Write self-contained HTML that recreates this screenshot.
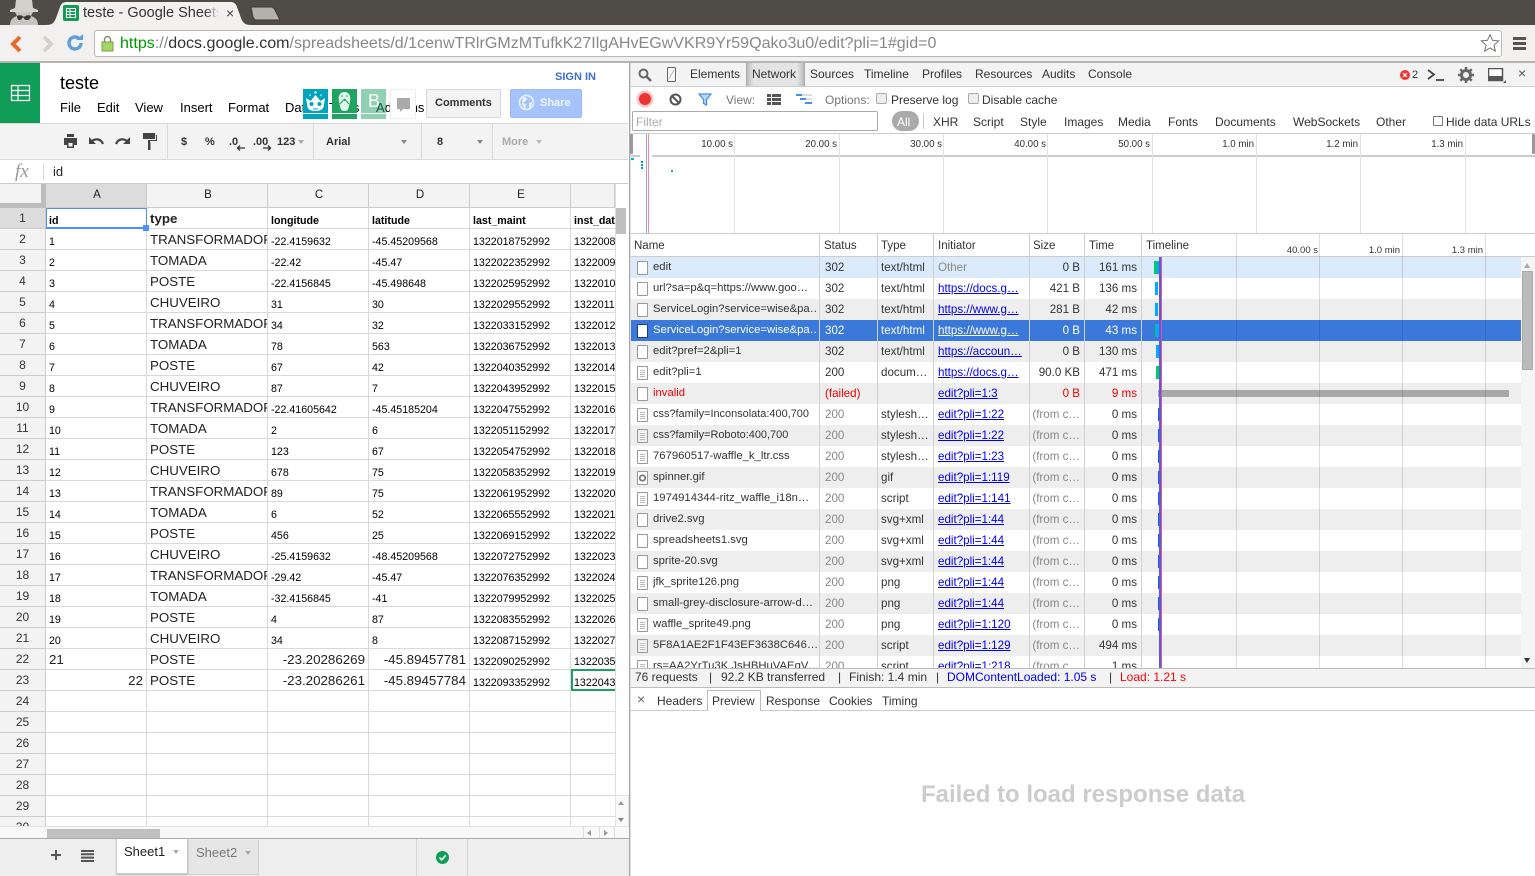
<!DOCTYPE html>
<html lang="en"><head><meta charset="utf-8"><title>teste - Google Sheets</title>
<style>
*{box-sizing:border-box}
html,body{margin:0;padding:0}
body{width:1535px;height:876px;overflow:hidden;position:relative;background:#fff;font-family:"Liberation Sans",Arial,sans-serif;color:#000}
.a{position:absolute;white-space:nowrap}
svg{position:absolute;display:block}
.box{position:absolute}
/* sheet */
#sh{position:absolute;left:0;top:208px;width:615px;height:618px;overflow:hidden}
#sh table{border-collapse:separate;border-spacing:0;table-layout:fixed;width:671px}
#sh td{height:21px;padding:0 3px 0;border-right:1px solid #d9d9d9;border-bottom:1px solid #d9d9d9;font-size:10.67px;line-height:13px;vertical-align:bottom;white-space:nowrap;overflow:hidden;color:#000}
#sh td:first-child{background:#f3f3f3;border-right:1px solid #ccc;border-bottom:1px solid #ccc;text-align:center;font-size:12px;color:#333;padding:0;vertical-align:middle;line-height:20px}
#sh td:nth-child(3){font-size:13.33px;line-height:16px;padding-bottom:1px;color:#222}
#sh td.l{font-size:13.33px;line-height:16px;padding-bottom:1px;color:#222}
#sh td.rt{font-size:13.33px;line-height:16px;padding-bottom:1px;text-align:right;color:#222}
#sh tr.h td{font-weight:bold}
.ch{position:absolute;top:184px;height:24px;background:#f3f3f3;border-right:1px solid #ccc;border-bottom:1px solid #ccc;text-align:center;font-size:11.5px;line-height:23px;color:#222;padding-left:2px}
.mn{position:absolute;top:100px;font-size:13px;line-height:15px;color:#000}
.tb{position:absolute;top:135px;font-size:11px;line-height:15px;font-weight:bold;color:#333}
.ar{position:absolute;width:0;height:0;border-left:3.5px solid transparent;border-right:3.5px solid transparent;border-top:4px solid #888}
/* devtools */
#dv{font-size:12px;color:#333}
.dt{position:absolute;font-size:12px;line-height:14px;white-space:nowrap;color:#333}
.r{position:absolute;left:631px;width:890px;height:21px;font-size:11.6px;line-height:21px;color:#333}
.r span{position:absolute;top:0;white-space:nowrap;overflow:hidden}
.r .n{left:22px;width:165px;font-size:11.3px}
.r .s{left:194px}
.r .t{left:250px;width:52px}
.r .i{left:307px;color:#00e;text-decoration:underline;max-width:84px}
.r .z{left:399px;width:50px;text-align:right}
.r .m{left:454px;width:52px;text-align:right}
.r .c{color:#888}
.g{background:#eee}
.sel{background:#3a78d9;color:#fff}
.sel .i{color:#fff}
.ic{position:absolute;left:6px;top:4px;width:11px;height:14px;background:#fff;border:1px solid #999;border-radius:1px}
.ic.d{background:repeating-linear-gradient(#fff 0 1px,#bbb 1px 2px);background-clip:content-box;padding:2px}
.v{position:absolute;width:1px;background:#d0d0d0}
.bar{position:absolute;height:13px}
.tl{position:absolute;top:138px;font-size:9.7px;line-height:14px;color:#333;text-align:right;width:60px;white-space:nowrap}
</style></head><body>

<!-- chrome top -->
<div class="box" style="left:0;top:0;width:1535px;height:25px;background:#4f4c45"></div>
<svg style="left:6px;top:0" width="36" height="25" viewBox="0 0 36 25"><path d="M4 25c0-6 4-8 7-9l-2-4h18l-2 4c3 1 7 3 7 9z" fill="#c6c5c0"/><path d="M10 0h16l1 8 5 2v2H4v-2l5-2z" fill="#d2d1cc"/><path d="M11 16c2-1 5-1 6 .5h2c1-1.500 4-1.500 6-.5-.5 3-2 4-4 4s-3-1-3.500-2.500h-1C16 19 15 20 13.500 20c-1.500 0-2.500-1-2.500-4z" fill="#3c3a35"/></svg>
<svg style="left:46px;top:1px" width="209" height="24" viewBox="0 0 209 24"><path d="M0 24c6 0 8-2 10-7l4-11c1-3 3-5 6-5h165c3 0 5 2 6 5l4 11c2 5 4 7 10 7z" fill="#f2f1f0"/></svg>
<svg style="left:250px;top:6px" width="31" height="15" viewBox="0 0 31 15"><path d="M1 1h20c2 0 3 1 4 3l5 10H6c-1 0-2-1-3-3z" fill="#b3b1aa" stroke="#3d3b36"/></svg>
<div class="box" style="left:63px;top:5px;width:16px;height:16px;background:#0f9d58;border-radius:2px"></div>
<svg style="left:66px;top:8px" width="10" height="10" viewBox="0 0 10 10"><path d="M.5.5h9v9h-9zM.5 3.500h9M.5 6.500h9M4 .5v9" fill="none" stroke="#fff"/></svg>
<div class="a" style="left:83px;top:4px;width:136px;overflow:hidden;font-size:14.5px;line-height:18px;color:#333">teste - Google Sheets</div>
<div class="box" style="left:205px;top:4px;width:14px;height:18px;background:linear-gradient(90deg,rgba(242,241,240,0),#f2f1f0)"></div>
<div class="a" style="left:226px;top:5px;font-size:14px;line-height:16px;color:#444">×</div>

<div class="box" style="left:0;top:25px;width:1535px;height:38px;background:#f2f1f0;border-bottom:2px solid #b5b5b5"></div>
<svg style="left:8px;top:34px" width="16" height="20" viewBox="0 0 16 20"><path d="M12 3L5 10l7 7" fill="none" stroke="#e8692c" stroke-width="4"/></svg>
<svg style="left:40px;top:34px" width="16" height="20" viewBox="0 0 16 20"><path d="M4 3l7 7-7 7" fill="none" stroke="#d3d2cf" stroke-width="4"/></svg>
<svg style="left:66px;top:34px" width="18" height="18" viewBox="0 0 18 18"><path d="M15 9a6 6 0 1 1-2-4.500" fill="none" stroke="#5f9fdd" stroke-width="3.400"/><path d="M10 6h7V0z" fill="#5f9fdd"/></svg>
<div class="box" style="left:94px;top:30px;width:1408px;height:27px;background:#fff;border:1px solid #b8b8b6;border-radius:3px"></div>
<svg style="left:101px;top:35px" width="13" height="17" viewBox="0 0 13 17"><path d="M3.500 7V4.500a3 3 0 0 1 6 0V7" fill="none" stroke="#8a8a80" stroke-width="1.500"/><rect x="1" y="7" width="11" height="9" fill="#a8d468" stroke="#78a040"/></svg>
<div class="a" style="left:120px;top:34px;font-size:16.06px;line-height:18px;color:#888"><span style="color:#090">https</span>://<span style="color:#333">docs.google.com</span>/spreadsheets/d/1cenwTRlrGMzMTufkK27IlgAHvEGwVKR9Yr59Qako3u0/edit?pli=1#gid=0</div>
<svg style="left:1480px;top:33px" width="20" height="20" viewBox="0 0 20 20"><path d="M10 1.500l2.500 5.800 6.200.6-4.700 4.100 1.400 6.100-5.400-3.200-5.400 3.200 1.400-6.100L1.300 7.900l6.200-.6z" fill="#fff" stroke="#777"/></svg>
<div class="box" style="left:1513px;top:37px;width:13px;height:3px;background:#555"></div>
<div class="box" style="left:1513px;top:42px;width:13px;height:3px;background:#555"></div>
<div class="box" style="left:1513px;top:47px;width:13px;height:3px;background:#555"></div>

<!-- sheets header -->
<div class="box" style="left:0;top:63px;width:40px;height:60px;background:#0f9d58"></div>
<svg style="left:10px;top:84px" width="21" height="18" viewBox="0 0 21 18"><path d="M1.500 1.500h18v15h-18zM1.500 6.500h18M1.500 11.500h18M8 1.500v15" fill="none" stroke="#fff" stroke-width="1.200"/></svg>
<div class="a" style="left:60px;top:72px;font-size:18px;line-height:22px">teste</div>
<div class="mn" style="left:60px">File</div><div class="mn" style="left:97px">Edit</div><div class="mn" style="left:135px">View</div><div class="mn" style="left:180px">Insert</div><div class="mn" style="left:228px">Format</div><div class="mn" style="left:285px">Data</div><div class="mn" style="left:329px">Tools</div><div class="mn" style="left:376px">Add-ons</div>
<div class="a" style="left:555px;top:71px;font-size:11px;line-height:13px;font-weight:bold;color:#3d6fd6">SIGN IN</div>

<div class="box" style="left:303px;top:89px;width:25px;height:30px;background:#00a5bd"></div>
<div class="box" style="left:303px;top:113px;width:25px;height:1px;background:#fff"></div>
<svg style="left:303px;top:89px" width="25" height="24" viewBox="0 0 25 24"><circle cx="12.500" cy="3.500" r="1.200" fill="#fff"/><circle cx="7" cy="6" r=".8" fill="#fff"/><circle cx="18" cy="6" r=".8" fill="#fff"/><path d="M3 9l4.500 3L12.500 6l5 6L22 9l-1.500 9c-1 3-4 4-8 4s-7-1-8-4z" fill="#fff"/><circle cx="8.500" cy="15" r="2" fill="#00a5bd"/><circle cx="16.500" cy="15" r="2" fill="#00a5bd"/><path d="M10 20h5" stroke="#00a5bd"/></svg>
<div class="box" style="left:332px;top:89px;width:25px;height:30px;background:#1fa463"></div>
<div class="box" style="left:332px;top:113px;width:25px;height:1px;background:#fff"></div>
<svg style="left:332px;top:89px" width="25" height="24" viewBox="0 0 25 24"><path d="M12.500 3c4 0 6 3 5.800 7-.2 4-1.300 6-1.800 9-.3 2-2 3-4 3s-3.700-1-4-3c-.5-3-1.600-5-1.800-9C6.500 6 8.500 3 12.500 3z" fill="#e2f5ea"/><path d="M12.500 10L8 15M12.500 10l4.500 5M12.500 10v2" stroke="#1fa463" fill="none"/><circle cx="10" cy="7" r=".8" fill="#1fa463"/><circle cx="15" cy="7" r=".8" fill="#1fa463"/></svg>
<div class="box" style="left:361px;top:89px;width:25px;height:30px;background:#1fa463;opacity:.5"></div>
<div class="box" style="left:361px;top:113px;width:25px;height:1px;background:#fff"></div>
<div class="a" style="left:368px;top:91px;font-size:18px;line-height:20px;color:#fff">B</div>
<div class="box" style="left:390px;top:89px;width:26px;height:30px;background:#fff;border:1px solid #eee"></div>
<svg style="left:396px;top:98px" width="15" height="15" viewBox="0 0 15 15"><path d="M1 0h13v11H7l-3 3v-3H1z" fill="#aaa"/></svg>
<div class="box" style="left:426px;top:89px;width:75px;height:29px;background:#f3f3f3;border:1px solid #d8d8d8;border-radius:2px"></div>
<div class="a" style="left:435px;top:96px;font-size:11px;line-height:14px;font-weight:bold;color:#333">Comments</div>
<div class="box" style="left:510px;top:89px;width:72px;height:29px;background:#a6c4fb;border:1px solid #9cbcf5;border-radius:2px"></div>
<svg style="left:518px;top:94px" width="17" height="17" viewBox="0 0 17 17"><circle cx="8.500" cy="8.500" r="7" fill="none" stroke="#eef4ff" stroke-width="1.500"/><path d="M5 3l4 1-1 3-3 1 3 3-1 4-3-5zM11 9l3-1-1 5-2 1z" fill="#eef4ff"/></svg>
<div class="a" style="left:540px;top:96px;font-size:11px;line-height:14px;font-weight:bold;color:#f0f5ff">Share</div>

<!-- toolbar -->
<div class="box" style="left:0;top:123px;width:628px;height:37px;background:#f3f3f3;border-top:1px solid #d9d9d9;border-bottom:1px solid #d9d9d9"></div>
<div class="box" style="left:167px;top:124px;width:1px;height:35px;background:#d9d9d9"></div>
<div class="box" style="left:313px;top:124px;width:1px;height:35px;background:#d9d9d9"></div>
<div class="box" style="left:421px;top:124px;width:1px;height:35px;background:#d9d9d9"></div>
<div class="box" style="left:492px;top:124px;width:1px;height:35px;background:#d9d9d9"></div>
<svg style="left:63px;top:134px" width="15" height="14" viewBox="0 0 15 14"><path d="M4 0h7v3H4zM1 4h13v7h-3v3H4v-3H1zM5.500 9v3.500h4V9z" fill="#444" fill-rule="evenodd"/></svg>
<svg style="left:88px;top:136px" width="17" height="11" viewBox="0 0 17 11"><path d="M4 5c4-3 9-2 11 3" fill="none" stroke="#444" stroke-width="2.200"/><path d="M1 1v7h7z" fill="#444"/></svg>
<svg style="left:114px;top:136px" width="17" height="11" viewBox="0 0 17 11"><path d="M13 5C9 2 4 3 2 8" fill="none" stroke="#444" stroke-width="2.200"/><path d="M16 1v7H9z" fill="#444"/></svg>
<svg style="left:142px;top:132px" width="16" height="18" viewBox="0 0 16 18"><path d="M1 1h12v6H1zM13.500 3H15v6H8v2H6V8h8V4" fill="#444"/><path d="M6 10h2.500v8H6z" fill="#444"/></svg>
<div class="tb" style="left:181px">$</div><div class="tb" style="left:205px">%</div>
<div class="tb" style="left:229px">.0</div><div class="tb" style="left:253px">.00</div><div class="tb" style="left:277px">123</div>
<svg style="left:236px;top:145px" width="10" height="6" viewBox="0 0 10 6"><path d="M9 3H2M4 .5L1.500 3 4 5.500" fill="none" stroke="#333" stroke-width="1.300"/></svg>
<svg style="left:262px;top:145px" width="10" height="6" viewBox="0 0 10 6"><path d="M1 3h7M6 .5L8.500 3 6 5.500" fill="none" stroke="#333" stroke-width="1.300"/></svg>
<div class="ar" style="left:298px;top:140px;border-top-color:#aaa"></div>
<div class="tb" style="left:326px">Arial</div><div class="ar" style="left:401px;top:140px"></div>
<div class="tb" style="left:437px">8</div><div class="ar" style="left:477px;top:140px"></div>
<div class="tb" style="left:502px;color:#aaa">More</div><div class="ar" style="left:536px;top:140px;border-top-color:#bbb"></div>

<!-- formula -->
<div class="a" style="left:15px;top:161px;font-family:'Liberation Serif',serif;font-style:italic;font-size:19px;line-height:21px;color:#999">fx</div>
<div class="box" style="left:43px;top:163px;width:1px;height:17px;background:#d9d9d9"></div>
<div class="a" style="left:53px;top:164px;font-size:13px;line-height:15px;color:#222">id</div>
<div class="box" style="left:0;top:183px;width:628px;height:1px;background:#ccc"></div>

<!-- col headers -->
<div class="box" style="left:0;top:184px;width:46px;height:24px;background:#f3f3f3"></div>
<div class="box" style="left:41px;top:184px;width:5px;height:24px;background:#bdbdbd"></div>
<div class="box" style="left:0;top:203px;width:46px;height:5px;background:#bdbdbd"></div>
<div class="ch" style="left:46px;width:101px;background:#dcdcdc">A</div>
<div class="ch" style="left:147px;width:121px">B</div>
<div class="ch" style="left:268px;width:101px">C</div>
<div class="ch" style="left:369px;width:101px">D</div>
<div class="ch" style="left:470px;width:101px">E</div>
<div class="ch" style="left:571px;width:44px"></div>

<div id="sh"><table><colgroup><col style="width:46px"><col style="width:101px"><col style="width:121px"><col style="width:101px"><col style="width:101px"><col style="width:101px"><col style="width:100px"></colgroup><tbody>
<tr class="h"><td style="background:#dcdcdc;font-weight:normal">1</td><td>id</td><td>type</td><td>longitude</td><td>latitude</td><td>last_maint</td><td>inst_date</td></tr>
<tr><td>2</td><td>1</td><td>TRANSFORMADOR</td><td>-22.4159632</td><td>-45.45209568</td><td>1322018752992</td><td>1322008752992</td></tr>
<tr><td>3</td><td>2</td><td>TOMADA</td><td>-22.42</td><td>-45.47</td><td>1322022352992</td><td>1322009152992</td></tr>
<tr><td>4</td><td>3</td><td>POSTE</td><td>-22.4156845</td><td>-45.498648</td><td>1322025952992</td><td>1322010352992</td></tr>
<tr><td>5</td><td>4</td><td>CHUVEIRO</td><td>31</td><td>30</td><td>1322029552992</td><td>1322011552992</td></tr>
<tr><td>6</td><td>5</td><td>TRANSFORMADOR</td><td>34</td><td>32</td><td>1322033152992</td><td>1322012752992</td></tr>
<tr><td>7</td><td>6</td><td>TOMADA</td><td>78</td><td>563</td><td>1322036752992</td><td>1322013952992</td></tr>
<tr><td>8</td><td>7</td><td>POSTE</td><td>67</td><td>42</td><td>1322040352992</td><td>1322014152992</td></tr>
<tr><td>9</td><td>8</td><td>CHUVEIRO</td><td>87</td><td>7</td><td>1322043952992</td><td>1322015352992</td></tr>
<tr><td>10</td><td>9</td><td>TRANSFORMADOR</td><td>-22.41605642</td><td>-45.45185204</td><td>1322047552992</td><td>1322016552992</td></tr>
<tr><td>11</td><td>10</td><td>TOMADA</td><td>2</td><td>6</td><td>1322051152992</td><td>1322017752992</td></tr>
<tr><td>12</td><td>11</td><td>POSTE</td><td>123</td><td>67</td><td>1322054752992</td><td>1322018952992</td></tr>
<tr><td>13</td><td>12</td><td>CHUVEIRO</td><td>678</td><td>75</td><td>1322058352992</td><td>1322019152992</td></tr>
<tr><td>14</td><td>13</td><td>TRANSFORMADOR</td><td>89</td><td>75</td><td>1322061952992</td><td>1322020352992</td></tr>
<tr><td>15</td><td>14</td><td>TOMADA</td><td>6</td><td>52</td><td>1322065552992</td><td>1322021552992</td></tr>
<tr><td>16</td><td>15</td><td>POSTE</td><td>456</td><td>25</td><td>1322069152992</td><td>1322022752992</td></tr>
<tr><td>17</td><td>16</td><td>CHUVEIRO</td><td>-25.4159632</td><td>-48.45209568</td><td>1322072752992</td><td>1322023952992</td></tr>
<tr><td>18</td><td>17</td><td>TRANSFORMADOR</td><td>-29.42</td><td>-45.47</td><td>1322076352992</td><td>1322024152992</td></tr>
<tr><td>19</td><td>18</td><td>TOMADA</td><td>-32.4156845</td><td>-41</td><td>1322079952992</td><td>1322025352992</td></tr>
<tr><td>20</td><td>19</td><td>POSTE</td><td>4</td><td>87</td><td>1322083552992</td><td>1322026552992</td></tr>
<tr><td>21</td><td>20</td><td>CHUVEIRO</td><td>34</td><td>8</td><td>1322087152992</td><td>1322027752992</td></tr>
<tr><td>22</td><td class="l">21</td><td>POSTE</td><td class="rt">-23.20286269</td><td class="rt">-45.89457781</td><td>1322090252992</td><td>1322035252992</td></tr>
<tr><td>23</td><td class="rt">22</td><td>POSTE</td><td class="rt">-23.20286261</td><td class="rt">-45.89457784</td><td>1322093352992</td><td>1322043352992</td></tr>
<tr><td>24</td><td></td><td></td><td></td><td></td><td></td><td></td></tr>
<tr><td>25</td><td></td><td></td><td></td><td></td><td></td><td></td></tr>
<tr><td>26</td><td></td><td></td><td></td><td></td><td></td><td></td></tr>
<tr><td>27</td><td></td><td></td><td></td><td></td><td></td><td></td></tr>
<tr><td>28</td><td></td><td></td><td></td><td></td><td></td><td></td></tr>
<tr><td>29</td><td></td><td></td><td></td><td></td><td></td><td></td></tr>
<tr><td>30</td><td></td><td></td><td></td><td></td><td></td><td></td></tr>
</tbody></table></div>
<!-- selections -->
<div class="box" style="left:46px;top:208px;width:101px;height:21px;border:2px solid #4d90fe;border-width:1px 1px 2px 1px"></div>
<div class="box" style="left:143px;top:225px;width:6px;height:6px;background:#4d90fe"></div>
<div class="box" style="left:571px;top:669px;width:44px;height:22px;border:2px solid #1c9f5f;border-right:none"></div>

<!-- sheet scrollbars -->
<div class="box" style="left:615px;top:184px;width:14px;height:642px;background:#fff;border-left:1px solid #ddd"></div>
<div class="box" style="left:616px;top:208px;width:10px;height:26px;background:#c0c0c0"></div>
<div class="box" style="left:615px;top:795px;width:14px;height:32px;background:#fafafa;border:1px solid #e4e4e4"></div>
<div class="ar" style="left:618px;top:801px;border-top:none;border-bottom:4px solid #999"></div>
<div class="ar" style="left:618px;top:818px"></div>
<div class="box" style="left:0;top:826px;width:629px;height:13px;background:#f8f8f8;border-top:1px solid #e4e4e4;border-bottom:1px solid #aaa"></div>
<div class="box" style="left:47px;top:829px;width:113px;height:9px;background:#c0c0c0"></div>
<div class="box" style="left:583px;top:827px;width:32px;height:11px;background:#fafafa;border-left:1px solid #ddd;border-right:1px solid #ddd"></div>
<div class="box" style="left:599px;top:827px;width:1px;height:11px;background:#ddd"></div>
<div class="ar" style="left:587px;top:830px;width:0;border:0;border-top:3px solid transparent;border-bottom:3px solid transparent;border-right:4px solid #999"></div>
<div class="ar" style="left:604px;top:830px;width:0;border:0;border-top:3px solid transparent;border-bottom:3px solid transparent;border-left:4px solid #999"></div>

<!-- sheet tabs -->
<div class="box" style="left:0;top:839px;width:629px;height:37px;background:#eee"></div>
<svg style="left:50px;top:849px" width="12" height="12" viewBox="0 0 12 12"><path d="M5 1h2v4h4v2H7v4H5V7H1V5h4z" fill="#555"/></svg>
<svg style="left:81px;top:850px" width="13" height="12" viewBox="0 0 13 12"><path d="M0 0h13v2H0zM0 3.300h13v2H0zM0 6.600h13v2H0zM0 10h13v2H0z" fill="#555"/></svg>
<div class="box" style="left:116px;top:839px;width:72px;height:35px;background:#fff;border:1px solid #ccc;border-top:none;box-shadow:0 1px 1px #bbb"></div>
<div class="a" style="left:124px;top:844px;font-size:13px;line-height:16px;color:#222">Sheet1</div>
<div class="ar" style="left:173px;top:850px;border-top-color:#aaa"></div>
<div class="box" style="left:188px;top:840px;width:71px;height:35px;background:#e6e6e6;border:1px solid #d0d0d0;border-top:none"></div>
<div class="a" style="left:196px;top:845px;font-size:13px;line-height:16px;color:#777">Sheet2</div>
<div class="ar" style="left:245px;top:851px;border-top-color:#aaa"></div>
<div class="box" style="left:416px;top:839px;width:1px;height:37px;background:#d4d4d4"></div>
<div class="box" style="left:467px;top:839px;width:1px;height:37px;background:#d4d4d4"></div>
<svg style="left:436px;top:851px" width="13" height="13" viewBox="0 0 13 13"><circle cx="6.500" cy="6.500" r="6.500" fill="#0f9d58"/><path d="M3.500 6.500l2.200 2.300 4-4.500" fill="none" stroke="#fff" stroke-width="1.600"/></svg>

<!-- DEVTOOLS -->
<div id="dv">
<div class="box" style="left:629px;top:63px;width:1px;height:813px;background:#a8a8a8"></div>
<div class="box" style="left:630px;top:63px;width:1px;height:813px;background:#ddd"></div>
<div class="box" style="left:631px;top:63px;width:904px;height:24px;background:#f3f3f3;border-bottom:1px solid #ccc"></div>
<svg style="left:638px;top:68px" width="14" height="14" viewBox="0 0 14 14"><circle cx="5.500" cy="5.500" r="4" fill="none" stroke="#666" stroke-width="2"/><path d="M8.500 8.500l4.500 4.500" stroke="#666" stroke-width="2.400"/></svg>
<svg style="left:666px;top:67px" width="11" height="15" viewBox="0 0 11 15"><rect x="1.500" y=".5" width="8" height="14" rx="1" fill="#f6f6f6" stroke="#666"/><path d="M3 12l5-9" stroke="#bbb"/></svg>
<div class="box" style="left:746px;top:63px;width:59px;height:23px;background:linear-gradient(90deg,#bbb,#e4e4e4 12%,#e4e4e4 88%,#bbb);border-left:1px solid #aaa;border-right:1px solid #aaa"></div>
<div class="dt" style="left:690px;top:67px">Elements</div>
<div class="dt" style="left:752px;top:67px">Network</div>
<div class="dt" style="left:810px;top:67px">Sources</div>
<div class="dt" style="left:864px;top:67px">Timeline</div>
<div class="dt" style="left:922px;top:67px">Profiles</div>
<div class="dt" style="left:975px;top:67px">Resources</div>
<div class="dt" style="left:1042px;top:67px">Audits</div>
<div class="dt" style="left:1088px;top:67px">Console</div>
<svg style="left:1400px;top:70px" width="10" height="10" viewBox="0 0 10 10"><circle cx="5" cy="5" r="5" fill="#e33"/><path d="M3 3l4 4M7 3l-4 4" stroke="#fff" stroke-width="1.200"/></svg>
<div class="dt" style="left:1412px;top:68px;font-size:11px">2</div>
<svg style="left:1427px;top:68px" width="18" height="14" viewBox="0 0 18 14"><path d="M1 2l6 4.500L1 11" fill="none" stroke="#444" stroke-width="1.800"/><path d="M9 12h8" stroke="#444" stroke-width="1.800"/></svg>
<svg style="left:1458px;top:67px" width="16" height="16" viewBox="0 0 16 16"><circle cx="8" cy="8" r="4.500" fill="none" stroke="#666" stroke-width="3"/><path d="M8 0v3M8 13v3M0 8h3M13 8h3M2.300 2.300l2.100 2.100M11.600 11.600l2.100 2.100M13.700 2.300l-2.100 2.100M4.400 11.600l-2.100 2.100" stroke="#666" stroke-width="2.500"/></svg>
<svg style="left:1488px;top:68px" width="18" height="15" viewBox="0 0 18 15"><rect x=".5" y=".5" width="14" height="12" fill="#fff" stroke="#555" stroke-width="1.500"/><path d="M1 8h13v5H1z" fill="#555"/><path d="M18 12v3h-3z" fill="#555"/></svg>
<div class="dt" style="left:1518px;top:66px;font-size:14px;color:#555">×</div>

<svg style="left:636px;top:90px" width="18" height="18" viewBox="0 0 18 18"><circle cx="9" cy="9" r="8.500" fill="#f6c6c6"/><circle cx="9" cy="9" r="6" fill="#e33"/></svg>
<svg style="left:669px;top:93px" width="13" height="13" viewBox="0 0 13 13"><circle cx="6.500" cy="6.500" r="5" fill="none" stroke="#555" stroke-width="2"/><path d="M3 3l7 7" stroke="#555" stroke-width="2"/></svg>
<svg style="left:698px;top:93px" width="14" height="13" viewBox="0 0 14 13"><path d="M1 1h12L8.500 6.500V12l-3-1.500v-4z" fill="#bcd8f8" stroke="#4a90e0" stroke-width="1.300"/></svg>
<div class="dt" style="left:726px;top:93px;color:#777">View:</div>
<svg style="left:767px;top:94px" width="14" height="11" viewBox="0 0 14 11"><path d="M0 0h4v3H0zM5 0h9v3H5zM0 4h4v3H0zM5 4h9v3H5zM0 8h4v3H0zM5 8h9v3H5z" fill="#555"/></svg>
<svg style="left:796px;top:94px" width="16" height="11" viewBox="0 0 16 11"><path d="M0 0h6v2H0zM4 4h6v2H4zM9 8h7v2H9z" fill="#4a90e0"/><path d="M6 0h10v2H6zM10 4h6v2h-6z" fill="#ddd"/></svg>
<div class="dt" style="left:825px;top:93px;color:#777">Options:</div>
<div class="box" style="left:876px;top:93px;width:11px;height:11px;background:#eee;border:1px solid #aaa;border-radius:2px"></div>
<div class="dt" style="left:891px;top:93px">Preserve log</div>
<div class="box" style="left:968px;top:93px;width:11px;height:11px;background:#eee;border:1px solid #aaa;border-radius:2px"></div>
<div class="dt" style="left:982px;top:93px">Disable cache</div>

<div class="box" style="left:632px;top:111px;width:246px;height:20px;background:#fff;border:1px solid #aaa;border-radius:2px"></div>
<div class="dt" style="left:636px;top:115px;color:#aaa">Filter</div>
<div class="box" style="left:892px;top:111px;width:27px;height:20px;background:#aaa;border-radius:10px"></div>
<div class="dt" style="left:897px;top:115px;color:#fff">All</div>
<div class="box" style="left:923px;top:113px;width:1px;height:16px;background:#ccc"></div>
<div class="dt" style="left:933px;top:115px">XHR</div>
<div class="dt" style="left:973px;top:115px">Script</div>
<div class="dt" style="left:1020px;top:115px">Style</div>
<div class="dt" style="left:1064px;top:115px">Images</div>
<div class="dt" style="left:1118px;top:115px">Media</div>
<div class="dt" style="left:1168px;top:115px">Fonts</div>
<div class="dt" style="left:1215px;top:115px">Documents</div>
<div class="dt" style="left:1293px;top:115px">WebSockets</div>
<div class="dt" style="left:1376px;top:115px">Other</div>
<div class="box" style="left:1433px;top:116px;width:10px;height:10px;background:#fff;border:1px solid #777;border-radius:1px"></div>
<div class="dt" style="left:1446px;top:115px">Hide data URLs</div>
<div class="box" style="left:631px;top:133px;width:904px;height:1px;background:#ccc"></div>

<!-- overview -->
<div class="box" style="left:652px;top:155px;width:883px;height:2px;background:#ccc"></div>
<div class="box" style="left:631px;top:155px;width:9px;height:2px;background:#ccc"></div>
<div class="v" style="left:734px;top:134px;height:99px;background:#e2e2e2"></div>
<div class="v" style="left:839px;top:134px;height:99px;background:#e2e2e2"></div>
<div class="v" style="left:943px;top:134px;height:99px;background:#e2e2e2"></div>
<div class="v" style="left:1047px;top:134px;height:99px;background:#e2e2e2"></div>
<div class="v" style="left:1152px;top:134px;height:99px;background:#e2e2e2"></div>
<div class="v" style="left:1256px;top:134px;height:99px;background:#e2e2e2"></div>
<div class="v" style="left:1360px;top:134px;height:99px;background:#e2e2e2"></div>
<div class="v" style="left:1465px;top:134px;height:99px;background:#e2e2e2"></div>
<div class="tl" style="left:673px">10.00 s</div>
<div class="tl" style="left:777px">20.00 s</div>
<div class="tl" style="left:882px">30.00 s</div>
<div class="tl" style="left:986px">40.00 s</div>
<div class="tl" style="left:1090px">50.00 s</div>
<div class="tl" style="left:1194px">1.0 min</div>
<div class="tl" style="left:1298px">1.2 min</div>
<div class="tl" style="left:1403px">1.3 min</div>
<div class="box" style="left:630px;top:134px;width:3px;height:20px;background:#999;border-radius:1px"></div>
<div class="box" style="left:1532px;top:134px;width:3px;height:20px;background:#999;border-radius:1px"></div>
<div class="box" style="left:646px;top:134px;width:1px;height:99px;background:#9a9af5"></div>
<div class="box" style="left:648px;top:134px;width:1px;height:99px;background:#f58a9a"></div>
<div class="box" style="left:631px;top:158px;width:3px;height:2px;background:#0bb"></div>
<div class="box" style="left:641px;top:161px;width:2px;height:2px;background:#09c"></div>
<div class="box" style="left:641px;top:164px;width:2px;height:2px;background:#09c"></div>
<div class="box" style="left:641px;top:167px;width:2px;height:2px;background:#09c"></div>
<div class="box" style="left:671px;top:170px;width:2px;height:2px;background:#0bb"></div>
<div class="box" style="left:631px;top:233px;width:904px;height:1px;background:#ccc"></div>

<!-- network header -->
<div class="dt" style="left:634px;top:239px;font-size:11.5px">Name</div>
<div class="dt" style="left:824px;top:239px;font-size:11.5px">Status</div>
<div class="dt" style="left:881px;top:239px;font-size:11.5px">Type</div>
<div class="dt" style="left:938px;top:239px;font-size:11.5px">Initiator</div>
<div class="dt" style="left:1033px;top:239px;font-size:11.5px">Size</div>
<div class="dt" style="left:1089px;top:239px;font-size:11.5px">Time</div>
<div class="dt" style="left:1146px;top:239px;font-size:11.5px">Timeline</div>
<div class="tl" style="left:1258px;top:244px;font-size:9.5px">40.00 s</div>
<div class="tl" style="left:1340px;top:244px;font-size:9.5px">1.0 min</div>
<div class="tl" style="left:1423px;top:244px;font-size:9.5px">1.3 min</div>
<div class="box" style="left:631px;top:256px;width:904px;height:1px;background:#ccc"></div>

<!-- network rows -->
<div class="box" style="left:631px;top:257px;width:904px;height:411px;overflow:hidden">
<div style="position:absolute;left:-631px;top:-257px;width:1535px;height:700px">
<div class="r" style="top:257px;background:#dbebfb"><i class="ic"></i><span class="n">edit</span><span class="s">302</span><span class="t">text/html</span><span class="i" style="color:#888;text-decoration:none">Other</span><span class="z">0 B</span><span class="m">161 ms</span></div>
<div class="r" style="top:278px"><i class="ic"></i><span class="n">url?sa=p&amp;q=https://www.goo…</span><span class="s">302</span><span class="t">text/html</span><span class="i">https://docs.g…</span><span class="z">421 B</span><span class="m">136 ms</span></div>
<div class="r g" style="top:299px"><i class="ic"></i><span class="n">ServiceLogin?service=wise&amp;pa…</span><span class="s">302</span><span class="t">text/html</span><span class="i">https://www.g…</span><span class="z">281 B</span><span class="m">42 ms</span></div>
<div class="r sel" style="top:320px"><i class="ic" style="border-color:#1b3f80"></i><span class="n">ServiceLogin?service=wise&amp;pa…</span><span class="s">302</span><span class="t">text/html</span><span class="i">https://www.g…</span><span class="z">0 B</span><span class="m">43 ms</span></div>
<div class="r g" style="top:341px"><i class="ic"></i><span class="n">edit?pref=2&amp;pli=1</span><span class="s">302</span><span class="t">text/html</span><span class="i">https://accoun…</span><span class="z">0 B</span><span class="m">130 ms</span></div>
<div class="r" style="top:362px"><i class="ic d"></i><span class="n">edit?pli=1</span><span class="s">200</span><span class="t">docum…</span><span class="i">https://docs.g…</span><span class="z">90.0 KB</span><span class="m">471 ms</span></div>
<div class="r g" style="top:383px;color:#e00"><i class="ic"></i><span class="n">invalid</span><span class="s">(failed)</span><span class="t"></span><span class="i">edit?pli=1:3</span><span class="z">0 B</span><span class="m">9 ms</span></div>
<div class="r" style="top:404px"><i class="ic d"></i><span class="n" style="font-size:10.95px">css?family=Inconsolata:400,700</span><span class="s c">200</span><span class="t">stylesh…</span><span class="i">edit?pli=1:22</span><span class="z c">(from c…</span><span class="m">0 ms</span></div>
<div class="r g" style="top:425px"><i class="ic d"></i><span class="n" style="font-size:10.95px">css?family=Roboto:400,700</span><span class="s c">200</span><span class="t">stylesh…</span><span class="i">edit?pli=1:22</span><span class="z c">(from c…</span><span class="m">0 ms</span></div>
<div class="r" style="top:446px"><i class="ic d"></i><span class="n">767960517-waffle_k_ltr.css</span><span class="s c">200</span><span class="t">stylesh…</span><span class="i">edit?pli=1:23</span><span class="z c">(from c…</span><span class="m">0 ms</span></div>
<div class="r g" style="top:467px"><i class="ic" style="background:radial-gradient(circle,#fff 20%,#777 30%,#777 45%,#fff 50%)"></i><span class="n">spinner.gif</span><span class="s c">200</span><span class="t">gif</span><span class="i">edit?pli=1:119</span><span class="z c">(from c…</span><span class="m">0 ms</span></div>
<div class="r" style="top:488px"><i class="ic d"></i><span class="n">1974914344-ritz_waffle_i18n…</span><span class="s c">200</span><span class="t">script</span><span class="i">edit?pli=1:141</span><span class="z c">(from c…</span><span class="m">0 ms</span></div>
<div class="r g" style="top:509px"><i class="ic"></i><span class="n">drive2.svg</span><span class="s c">200</span><span class="t">svg+xml</span><span class="i">edit?pli=1:44</span><span class="z c">(from c…</span><span class="m">0 ms</span></div>
<div class="r" style="top:530px"><i class="ic"></i><span class="n">spreadsheets1.svg</span><span class="s c">200</span><span class="t">svg+xml</span><span class="i">edit?pli=1:44</span><span class="z c">(from c…</span><span class="m">0 ms</span></div>
<div class="r g" style="top:551px"><i class="ic"></i><span class="n">sprite-20.svg</span><span class="s c">200</span><span class="t">svg+xml</span><span class="i">edit?pli=1:44</span><span class="z c">(from c…</span><span class="m">0 ms</span></div>
<div class="r" style="top:572px"><i class="ic d"></i><span class="n">jfk_sprite126.png</span><span class="s c">200</span><span class="t">png</span><span class="i">edit?pli=1:44</span><span class="z c">(from c…</span><span class="m">0 ms</span></div>
<div class="r g" style="top:593px"><i class="ic"></i><span class="n">small-grey-disclosure-arrow-d…</span><span class="s c">200</span><span class="t">png</span><span class="i">edit?pli=1:44</span><span class="z c">(from c…</span><span class="m">0 ms</span></div>
<div class="r" style="top:614px"><i class="ic d"></i><span class="n">waffle_sprite49.png</span><span class="s c">200</span><span class="t">png</span><span class="i">edit?pli=1:120</span><span class="z c">(from c…</span><span class="m">0 ms</span></div>
<div class="r g" style="top:635px"><i class="ic d"></i><span class="n">5F8A1AE2F1F43EF3638C646…</span><span class="s c">200</span><span class="t">script</span><span class="i">edit?pli=1:129</span><span class="z c">(from c…</span><span class="m">494 ms</span></div>
<div class="r" style="top:656px"><i class="ic d"></i><span class="n">rs=AA2YrTu3K JsHBHuVAEqV…</span><span class="s c">200</span><span class="t">script</span><span class="i">edit?pli=1:218</span><span class="z c">(from c…</span><span class="m">1 ms</span></div>

<div class="bar" style="left:1154px;top:261px;width:3px;background:#0c6"></div><div class="bar" style="left:1157px;top:261px;width:2px;background:#0af"></div>
<div class="bar" style="left:1155px;top:282px;width:3px;background:#0af"></div>
<div class="bar" style="left:1155px;top:303px;width:3px;background:#0af"></div>
<div class="bar" style="left:1155px;top:324px;width:1px;background:#0c6"></div><div class="bar" style="left:1156px;top:324px;width:4px;background:#0af"></div>
<div class="bar" style="left:1156px;top:345px;width:3px;background:#0af"></div>
<div class="bar" style="left:1156px;top:366px;width:3px;background:#0c6"></div><div class="bar" style="left:1159px;top:366px;width:2px;background:#06e"></div>
<div class="bar" style="left:1158px;top:390px;width:351px;height:7px;background:#a8a8a8"></div>
<div class="bar" style="left:1158px;top:408px;width:3px;background:#06e"></div>
<div class="bar" style="left:1158px;top:429px;width:3px;background:#06e"></div>
<div class="bar" style="left:1158px;top:450px;width:3px;background:#06e"></div>
<div class="bar" style="left:1158px;top:471px;width:3px;background:#06e"></div>
<div class="bar" style="left:1158px;top:492px;width:3px;background:#06e"></div>
<div class="bar" style="left:1158px;top:513px;width:3px;background:#06e"></div>
<div class="bar" style="left:1158px;top:534px;width:3px;background:#06e"></div>
<div class="bar" style="left:1158px;top:555px;width:3px;background:#06e"></div>
<div class="bar" style="left:1158px;top:576px;width:3px;background:#06e"></div>
<div class="bar" style="left:1158px;top:597px;width:3px;background:#06e"></div>
<div class="bar" style="left:1158px;top:618px;width:3px;background:#06e"></div>
<div class="bar" style="left:1159px;top:639px;width:3px;background:#06e"></div>
<div class="bar" style="left:1159px;top:660px;width:3px;background:#0af"></div>
</div></div>

<!-- net col lines -->
<div class="v" style="left:819px;top:234px;height:434px"></div>
<div class="v" style="left:877px;top:234px;height:434px"></div>
<div class="v" style="left:933px;top:234px;height:434px"></div>
<div class="v" style="left:1029px;top:234px;height:434px"></div>
<div class="v" style="left:1084px;top:234px;height:434px"></div>
<div class="v" style="left:1141px;top:234px;height:434px"></div>
<div class="v" style="left:1236px;top:234px;height:434px;background:rgba(0,0,0,.13)"></div>
<div class="v" style="left:1319px;top:234px;height:434px;background:rgba(0,0,0,.13)"></div>
<div class="v" style="left:1402px;top:234px;height:434px;background:rgba(0,0,0,.13)"></div>
<div class="v" style="left:1485px;top:234px;height:434px;background:rgba(0,0,0,.13)"></div>
<div class="box" style="left:1159px;top:257px;width:1.5px;height:411px;background:#5a5ae8"></div>
<div class="box" style="left:1160.5px;top:257px;width:1px;height:411px;background:#e8558a"></div>

<!-- net scrollbar -->
<div class="box" style="left:1521px;top:257px;width:14px;height:411px;background:#f5f5f5"></div>
<div class="ar" style="left:1524px;top:263px;border-top:none;border-bottom:5px solid #aaa"></div>
<div class="box" style="left:1522px;top:271px;width:11px;height:99px;background:#bbb;border:1px solid #aaa"></div>
<div class="ar" style="left:1524px;top:658px;border-top-color:#333;border-top-width:5px"></div>

<!-- status -->
<div class="box" style="left:631px;top:668px;width:904px;height:20px;background:#f3f3f3;border-top:1px solid #bbb;border-bottom:1px solid #bbb"></div>
<div class="dt" style="left:635px;top:670px">76 requests</div>
<div class="dt" style="left:709px;top:670px">|</div>
<div class="dt" style="left:721px;top:670px">92.2 KB transferred</div>
<div class="dt" style="left:838px;top:670px">|</div>
<div class="dt" style="left:849px;top:670px">Finish: 1.4 min</div>
<div class="dt" style="left:936px;top:670px">|</div>
<div class="dt" style="left:947px;top:670px;color:#00e">DOMContentLoaded: 1.05 s</div>
<div class="dt" style="left:1109px;top:670px">|</div>
<div class="dt" style="left:1120px;top:670px;color:#f00">Load: 1.21 s</div>

<!-- detail tabs -->
<div class="box" style="left:631px;top:710px;width:904px;height:1px;background:#ccc"></div>
<div class="box" style="left:707px;top:690px;width:54px;height:21px;background:#fff;border:1px solid #bbb;border-bottom:none"></div>
<div class="dt" style="left:637px;top:692px;font-size:14px;color:#666">×</div>
<div class="dt" style="left:657px;top:694px">Headers</div>
<div class="dt" style="left:712px;top:694px">Preview</div>
<div class="dt" style="left:766px;top:694px">Response</div>
<div class="dt" style="left:829px;top:694px">Cookies</div>
<div class="dt" style="left:882px;top:694px">Timing</div>
<div class="a" style="left:921px;top:781px;font-size:24px;line-height:28px;font-weight:bold;color:#ccc">Failed to load response data</div>
</div>
</body></html>
